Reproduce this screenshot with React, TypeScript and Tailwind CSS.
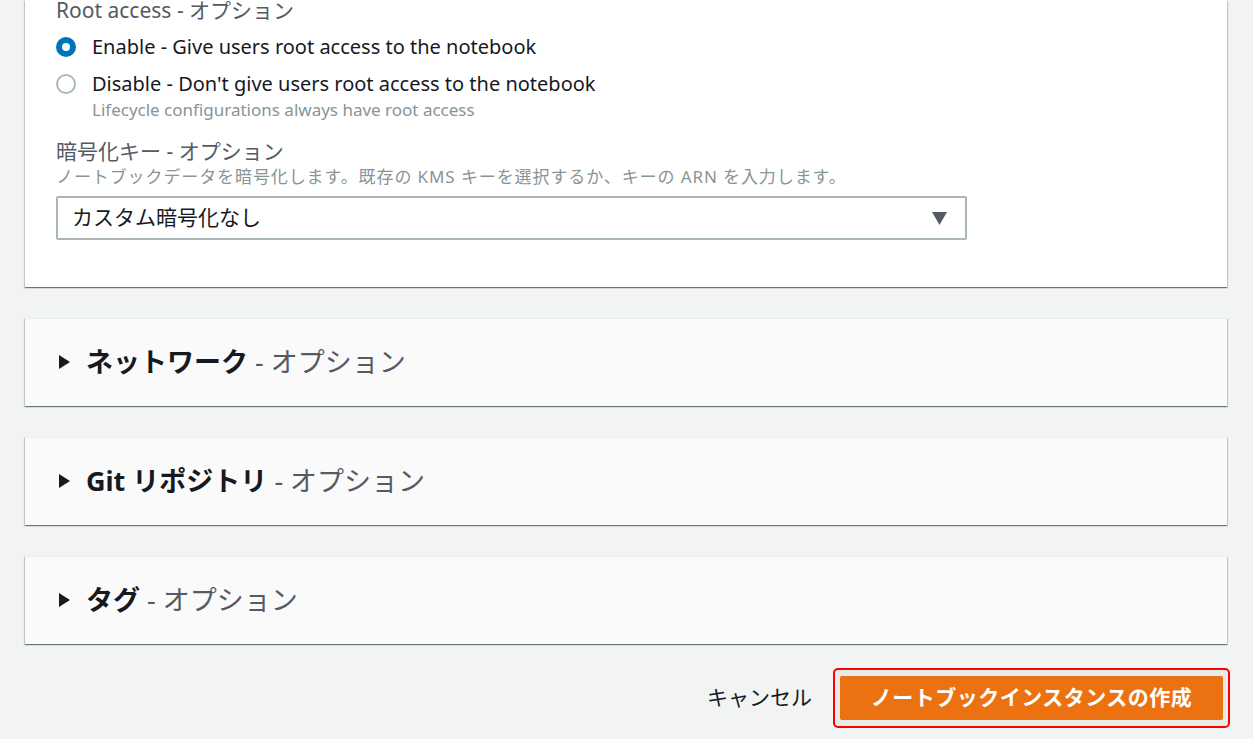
import React from "react";

const font = { fontFamily: '"Noto Sans", "Noto Sans CJK JP", sans-serif' };

function Collapsed({ title }: { title: string }) {
  return (
    <div className="h-[88px] bg-[#fafafa] flex items-center pl-[34px] pb-[3px] shadow-[0_1px_1px_0_rgba(0,28,36,0.4),1px_1px_1px_0_rgba(0,28,36,0.15),-1px_1px_1px_0_rgba(0,28,36,0.15)] border-t border-[#eaeded]">
      <svg width="11" height="14" viewBox="0 0 11 14" className="mr-[16px] mt-[1px]">
        <path d="M0 0 L11 7 L0 14 Z" fill="#16191f" />
      </svg>
      <span className="text-[27px] leading-none text-[#16191f]">
        <span className="font-bold">{title}</span>
        <span className="text-[#545b64]"> - オプション</span>
      </span>
    </div>
  );
}

export default function App() {
  return (
    <div className="w-[1253px] h-[739px] bg-[#f2f3f3] overflow-hidden pl-[25px] pr-[26px]" style={font}>
      <div className="bg-white h-[287px] pl-[31px] pt-px shadow-[0_1px_1px_0_rgba(0,28,36,0.4),1px_1px_1px_0_rgba(0,28,36,0.15),-1px_1px_1px_0_rgba(0,28,36,0.15)]">
        <div className="text-[21px] leading-[20px] text-[#545b64] h-[20px] -mt-[1px]">Root access - オプション</div>
        <div className="flex items-center h-[20px] mt-[17px]">
          <span className="w-[20px] h-[20px] rounded-full bg-[#0073bb] flex items-center justify-center mr-[16px]">
            <span className="w-[8px] h-[8px] rounded-full bg-white" />
          </span>
          <span className="text-[20px] text-[#16191f]">Enable - Give users root access to the notebook</span>
        </div>
        <div className="flex items-center h-[20px] mt-[17px]">
          <span className="w-[20px] h-[20px] rounded-full border-[2px] border-[#aab7b8] bg-white mr-[16px]" />
          <span className="text-[20px] text-[#16191f]">Disable - Don't give users root access to the notebook</span>
        </div>
        <div className="ml-[36px] text-[17px] leading-[20px] text-[#879596] mt-[6px]">Lifecycle configurations always have root access</div>
        <div className="text-[21px] leading-[20px] text-[#545b64] mt-[21px]">暗号化キー - オプション</div>
        <div className="text-[17px] tracking-[0.9px] leading-[20px] text-[#879596] mt-[6px]">ノートブックデータを暗号化します。既存の KMS キーを選択するか、キーの ARN を入力します。</div>
        <div className="w-[911px] h-[44px] mt-[9px] border-[2px] border-[#aab7b8] rounded-[2px] flex items-center justify-between pl-[14px] pr-[18px]">
          <span className="text-[21px] text-[#16191f]">カスタム暗号化なし</span>
          <svg width="15" height="13" viewBox="0 0 15 13">
            <path d="M0 0 L15 0 L7.5 13 Z" fill="#545b64" />
          </svg>
        </div>
      </div>
      <div className="mt-[31px] flex flex-col gap-[31px]">
        <Collapsed title="ネットワーク" />
        <Collapsed title="Git リポジトリ" />
        <Collapsed title="タグ" />
      </div>
      <div className="flex items-center justify-end mt-[24px] mr-[-3px]">
        <span className="text-[21px] text-[#16191f] mr-[21px]">キャンセル</span>
        <div className="rounded-[5px] border-[2px] border-[#ff0000] px-[5px] py-[6px] bg-[#e9ebeb]">
          <button className="h-[44px] w-[383px] bg-[#ec7211] rounded-[2px] text-white font-bold text-[21px] tracking-[0.5px] flex items-center justify-center">ノートブックインスタンスの作成</button>
        </div>
      </div>
    </div>
  );
}
